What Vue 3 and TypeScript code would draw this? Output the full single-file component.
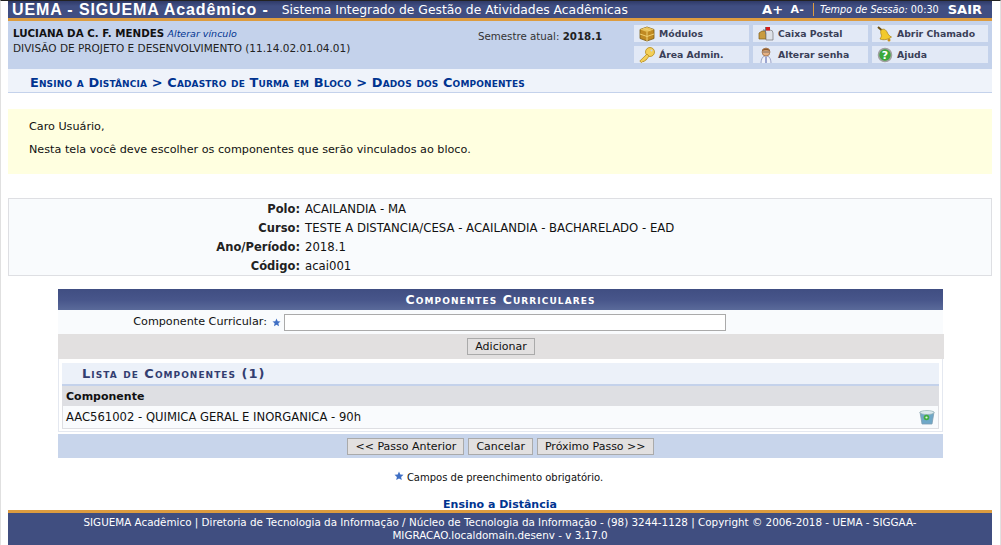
<script setup lang="ts">
const details = [
  { label: 'Polo:', value: 'ACAILANDIA - MA' },
  { label: 'Curso:', value: 'TESTE A DISTANCIA/CESA - ACAILANDIA - BACHARELADO - EAD' },
  { label: 'Ano/Período:', value: '2018.1' },
  { label: 'Código:', value: 'acai001' },
]
</script>

<template>
  <div class="page">
    <header class="topbar">
      <div class="brand">
        <span class="brand-main">UEMA - SIGUEMA Acadêmico -</span>
        <span class="brand-sub">Sistema Integrado de Gestão de Atividades Acadêmicas</span>
      </div>
      <div class="session">
        <span class="font-size">A+</span>
        <span class="font-size small">A-</span>
        <span class="timer"><i>Tempo de Sessão:</i> 00:30</span>
        <span class="exit">SAIR</span>
      </div>
    </header>

    <section class="userbar">
      <div class="user">
        <div><b class="name">LUCIANA DA C. F. MENDES</b> <i class="change">Alterar vínculo</i></div>
        <div class="unit">DIVISÃO DE PROJETO E DESENVOLVIMENTO (11.14.02.01.04.01)</div>
      </div>
      <div class="semester">Semestre atual: <b>2018.1</b></div>
      <nav class="menu">
        <a class="item">
          <svg viewBox="0 0 16 16" class="ico"><path d="M1 3.500L8 1l7 2.500v9L8 15l-7-2.500z" fill="#c08a22" stroke="#7a5a14" stroke-width=".8"/><path d="M1 3.500L8 6l7-2.500L8 1z" fill="#e8c25a"/><path d="M8 6v9M1 8l7 2.500L15 8M4.500 2.200l7 2.600" fill="none" stroke="#f0d070" stroke-width="1"/></svg>
          Módulos
        </a>
        <a class="item">
          <svg viewBox="0 0 16 16" class="ico"><path d="M1 7l3-2h4v8H1z" fill="#c99b3f" stroke="#7d5d1b" stroke-width=".7"/><path d="M5 4h7a3 3 0 013 3v7H8V7a3 3 0 00-3-3z" fill="#dde1e8" stroke="#777" stroke-width=".7"/><path d="M7 1h1v7H7z" fill="#777"/><path d="M8 1h4v3.500H8z" fill="#d51c1c"/></svg>
          Caixa Postal
        </a>
        <a class="item">
          <svg viewBox="0 0 16 16" class="ico"><path d="M1 1l4 3.500" stroke="#6b4f16" stroke-width="2"/><path d="M4 4c3-2 5 0 6 2s2 4 4.500 5c-3 2.500-8 3.500-11.500 2 1-2 2-3 1-5-.4-1-.5-2 0-4z" fill="#f2c92c" stroke="#a67c10" stroke-width=".7"/><circle cx="12" cy="14" r="1.500" fill="#c8901c"/></svg>
          Abrir Chamado
        </a>
        <a class="item">
          <svg viewBox="0 0 16 16" class="ico"><circle cx="11" cy="5" r="4.500" fill="#f3cf58" stroke="#b58a1c" stroke-width=".8"/><circle cx="12.500" cy="3.500" r="1" fill="#c4d2eb"/><path d="M8 7L.8 14l1.700 1.700 1.500-1.500 1 .5 1-1.500 1 0 3-4z" fill="#f3cf58" stroke="#b58a1c" stroke-width=".8"/></svg>
          Área Admin.
        </a>
        <a class="item">
          <svg viewBox="0 0 16 16" class="ico"><path d="M3 17c0-6 2-8 5-8s5 2 5 8z" fill="#f1f3fa" stroke="#7a84b4" stroke-width=".7"/><path d="M7.500 10h1v6h-1z" fill="#4a5aa8"/><circle cx="8" cy="5" r="4" fill="#e6b184" stroke="#8a5a30" stroke-width=".6"/><path d="M4 4c1-3.500 7-3.500 8 0-2-1-6-1-8 0z" fill="#8b5a2b"/><path d="M4.500 5h7" stroke="#555" stroke-width=".7"/></svg>
          Alterar senha
        </a>
        <a class="item">
          <svg viewBox="0 0 16 16" class="ico"><circle cx="8" cy="8" r="6.500" fill="#39a83a" stroke="#a0a0a0" stroke-width="1.600"/><text x="8" y="12" text-anchor="middle" class="q">?</text></svg>
          Ajuda
        </a>
      </nav>
    </section>

    <div class="crumbs">Ensino a Distância &gt; Cadastro de Turma em Bloco &gt; Dados dos Componentes</div>

    <main class="content">
      <div class="notice">
        <p>Caro Usuário,</p>
        <p>Nesta tela você deve escolher os componentes que serão vinculados ao bloco.</p>
      </div>

      <div class="details">
        <template v-for="d in details" :key="d.label">
          <b class="d-label">{{ d.label }}</b>
          <span class="d-value">{{ d.value }}</span>
        </template>
      </div>

      <form class="form" @submit.prevent>
        <div class="caption">Componentes Curriculares</div>
        <div class="field">
          <label class="field-label">Componente Curricular:</label>
          <svg viewBox="0 0 10 10" class="star"><path d="M5 .5l1.300 3 3.200.3-2.400 2.100.7 3.200L5 7.400 2.200 9.100l.7-3.200L.5 3.800l3.200-.3z" fill="#3f6fc4"/></svg>
          <input class="text" type="text" />
        </div>
        <div class="add-row"><button class="btn" type="button">Adicionar</button></div>
        <div class="list">
          <div class="list-title">Lista de Componentes (1)</div>
          <div class="list-head">Componente</div>
          <div class="list-row">
            <span>AAC561002 - QUIMICA GERAL E INORGANICA - 90h</span>
            <svg viewBox="0 0 16 16" class="trash"><path d="M1 3h14l-2 12H3z" fill="#6fa8c8" stroke="#7d9cb0" stroke-width=".8"/><ellipse cx="8" cy="3.500" rx="7" ry="2" fill="#dbe8ee" stroke="#8aa" stroke-width=".6"/><circle cx="7.500" cy="8.500" r="2.800" fill="#3fae3f"/><circle cx="7.500" cy="8.500" r="1.100" fill="#dff5df"/></svg>
          </div>
        </div>
        <div class="actions">
          <button class="btn" type="button">&lt;&lt; Passo Anterior</button>
          <button class="btn" type="button">Cancelar</button>
          <button class="btn" type="button">Próximo Passo &gt;&gt;</button>
        </div>
      </form>

      <div class="required">
        <svg viewBox="0 0 10 10" class="star"><path d="M5 .5l1.300 3 3.200.3-2.400 2.100.7 3.200L5 7.400 2.200 9.100l.7-3.200L.5 3.800l3.200-.3z" fill="#3f6fc4"/></svg>
        Campos de preenchimento obrigatório.
      </div>
      <a class="module">Ensino a Distância</a>
    </main>

    <footer class="footer">
      SIGUEMA Acadêmico | Diretoria de Tecnologia da Informação / Núcleo de Tecnologia da Informação - (98) 3244-1128 | Copyright © 2006-2018 - UEMA - SIGGAA-MIGRACAO.localdomain.desenv - v 3.17.0
    </footer>
  </div>
</template>

<style>
html, body { margin: 0; height: 545px; overflow: hidden; background: #fff; }
</style>

<style scoped>
.page {
  box-sizing: border-box;
  height: 545px;
  display: flex;
  flex-direction: column;
  border-top: 1px solid #222;
  border-left: 1px solid #e0e0e0;
  border-right: 1px solid #e0e0e0;
  padding: 0 8px 0 7px;
  font: 11.2px/1.2 "DejaVu Sans", Verdana, sans-serif;
  color: #111;
}
.topbar {
  height: 20px;
  box-sizing: border-box;
  display: flex;
  align-items: center;
  justify-content: space-between;
  background: linear-gradient(#2f3a68, #404e82 30%, #404e82);
  border-bottom: 3px solid #dd9c3f;
  color: #fff;
  white-space: nowrap;
}
.brand { display: flex; align-items: center; padding-top: 1px; }
.brand-main {
  margin-left: 4px;
  font: bold 16px "Liberation Sans", Arial, sans-serif;
  letter-spacing: .88px;
}
.brand-sub { margin-left: 13px; font-size: 12.350px; }
.session { display: flex; align-items: center; margin-right: 10px; }
.font-size { font: bold 13px "DejaVu Sans", sans-serif; margin-right: 7px; letter-spacing: .2px; }
.font-size.small { font-size: 11px; margin-right: 9px; }
.timer {
  border-left: 1px solid #dd9c3f;
  padding-left: 6px;
  font-size: 9.700px;
  line-height: 13px;
}
.exit { font: bold 13px "DejaVu Sans", sans-serif; margin-left: 9px; }
.userbar {
  height: 48px;
  display: flex;
  background: #c4d2eb;
}
.user { width: 465px; padding: 5px 0 0 5px; font-size: 10.500px; line-height: 14px; }
.name { font-size: 10.300px; }
.change { color: #003390; font-size: 9.500px; }
.unit { color: #222; }
.semester { width: 150px; padding-top: 9px; font-size: 10.250px; color: #333; white-space: nowrap; }
.semester b { color: #222; }
.menu {
  margin-left: 6px;
  padding-top: 4px;
  display: grid;
  grid-template-columns: 115px 115px 116px;
  grid-auto-rows: 17px;
  column-gap: 4px;
  row-gap: 4px;
}
.item {
  display: flex;
  align-items: center;
  background: #e2e9f6;
  padding-left: 5px;
  font-size: 9.300px;
  font-weight: bold;
  color: #3a3f58;
  overflow: hidden;
  white-space: nowrap;
}
.ico { width: 16px; height: 16px; margin-right: 4px; flex: none; }
.q { font: bold 11px "DejaVu Sans", sans-serif; fill: #fff; }
.crumbs {
  height: 24px;
  box-sizing: border-box;
  border-bottom: 1px solid #c4d2eb;
  background: #eff3fa;
  padding: 6px 0 0 22px;
  font-size: 12.900px;
  letter-spacing: .135px;
  font-weight: bold;
  font-variant: small-caps;
  color: #003390;
  white-space: nowrap;
}
.content { flex: 1; display: flex; flex-direction: column; min-height: 0; }
.notice {
  margin-top: 16px;
  height: 65px;
  box-sizing: border-box;
  background: #ffffe0;
  padding: 11px 21px;
}
.notice p { margin: 0 0 10px; line-height: 13px; }
.details {
  margin-top: 24px;
  height: 78px;
  box-sizing: border-box;
  border: 1px solid #dedfe3;
  background: #f9fbfd;
  padding-top: 1px;
  display: grid;
  grid-template-columns: 291px 1fr;
  grid-auto-rows: 19px;
  column-gap: 5px;
  align-items: center;
}
.d-label { text-align: right; color: #222; font-size: 11.500px; }
.d-value { font-size: 11.700px; }
.form {
  margin: 13px 49px 0 50px;
  display: flex;
  flex-direction: column;
}
.caption {
  height: 21px;
  line-height: 21px;
  text-align: center;
  background: linear-gradient(#404e82 0, #47558a 50%, #5a6a9a);
  color: #fff;
  font-weight: bold;
  font-variant: small-caps;
  font-size: 12.500px;
  letter-spacing: 1.070px;
}
.field {
  height: 24px;
  display: flex;
  align-items: center;
  background: #f9fbfd;
}
.field-label { width: 209px; text-align: right; }
.star { width: 9px; height: 9px; margin: 0 3px 0 5px; flex: none; }
.text {
  box-sizing: border-box;
  width: 442px;
  height: 17px;
  border: 1px solid #aaa;
  background: #fff;
  padding: 0;
}
.add-row {
  height: 25px;
  background: #e2e0e0;
  display: flex;
  justify-content: center;
  align-items: center;
  margin-right: -1px;
}
.btn {
  height: 17px;
  box-sizing: border-box;
  border: 1px solid #aaa;
  background: #e2e0e0;
  color: #111;
  font: 11px "DejaVu Sans", Verdana, sans-serif;
  padding: 0 7px;
}
.list {
  border: 1px solid #e4e8f0;
  border-top: 0;
  padding: 4px 3px 2px;
  background: #fff;
}
.list-title {
  height: 21px;
  line-height: 22px;
  background: #ecf1f9;
  border-bottom: 2px solid #c4d2eb;
  padding-left: 20px;
  font-size: 13px;
  font-weight: bold;
  font-variant: small-caps;
  letter-spacing: 1.020px;
  color: #333e70;
}
.list-head {
  height: 20px;
  line-height: 22px;
  background: #dedfe3;
  font-weight: bold;
  font-size: 11px;
  padding-left: 4px;
}
.list-row {
  height: 23px;
  display: flex;
  align-items: center;
  justify-content: space-between;
  background: #f9fbfd;
  border-bottom: 1px solid #dedfe3;
  border-right: 1px solid #dedfe3;
  border-left: 1px solid #dedfe3;
  padding: 1px 3px 0 3px;
  box-sizing: border-box;
  font-size: 11.600px;
}
.trash { width: 16px; height: 16px; margin-top: -1px; }
.actions {
  height: 24px;
  display: flex;
  justify-content: center;
  align-items: center;
  gap: 4px;
  margin-top: 2px;
  background: #c8d5eb;
}
.required {
  margin-top: 14px;
  padding-right: 3px;
  display: flex;
  justify-content: center;
  align-items: center;
  font-size: 10px;
}
.required .star { width: 10px; height: 10px; margin: -5px 3px 0 0; }
.module {
  margin-top: 14px;
  text-align: center;
  font-weight: bold;
  font-size: 11px;
  color: #003390;
}
.footer {
  box-sizing: border-box;
  height: 35px;
  border-top: 3px solid #dd9c3f;
  background: #404e80;
  color: #fff;
  font-size: 10.360px;
  line-height: 13px;
  text-align: center;
  padding: 3px 60px 0;
}
</style>
